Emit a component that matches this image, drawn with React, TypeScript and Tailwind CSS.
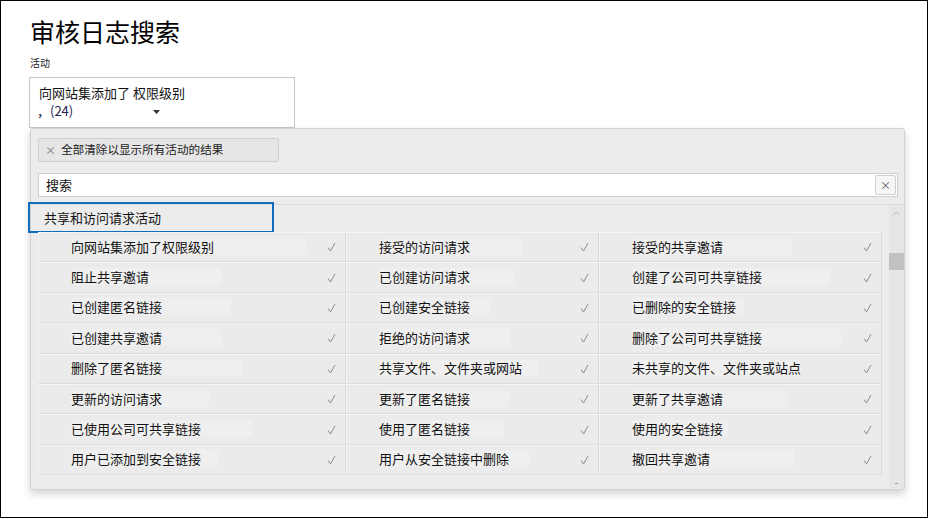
import { ChevronUp } from "lucide-react";

type Item = { label: string; hl: string };

const rows: Item[][] = [
  [
    { label: "向网站集添加了权限级别", hl: "min-w-[236px]" },
    { label: "接受的访问请求", hl: "min-w-[143px]" },
    { label: "接受的共享邀请", hl: "min-w-[160px]" },
  ],
  [
    { label: "阻止共享邀请", hl: "min-w-[150px]" },
    { label: "已创建访问请求", hl: "min-w-[135px]" },
    { label: "创建了公司可共享链接", hl: "min-w-[198px]" },
  ],
  [
    { label: "已创建匿名链接", hl: "min-w-[160px]" },
    { label: "已创建安全链接", hl: "min-w-[112px]" },
    { label: "已删除的安全链接", hl: "min-w-[112px]" },
  ],
  [
    { label: "已创建共享邀请", hl: "min-w-[150px]" },
    { label: "拒绝的访问请求", hl: "min-w-[131px]" },
    { label: "删除了公司可共享链接", hl: "min-w-[209px]" },
  ],
  [
    { label: "删除了匿名链接", hl: "min-w-[170px]" },
    { label: "共享文件、文件夹或网站", hl: "min-w-[160px]" },
    { label: "未共享的文件、文件夹或站点", hl: "min-w-[160px]" },
  ],
  [
    { label: "更新的访问请求", hl: "min-w-[138px]" },
    { label: "更新了匿名链接", hl: "min-w-[130px]" },
    { label: "更新了共享邀请", hl: "min-w-[156px]" },
  ],
  [
    { label: "已使用公司可共享链接", hl: "min-w-[181px]" },
    { label: "使用了匿名链接", hl: "min-w-[125px]" },
    { label: "使用的安全链接", hl: "min-w-[96px]" },
  ],
  [
    { label: "用户已添加到安全链接", hl: "min-w-[148px]" },
    { label: "用户从安全链接中删除", hl: "min-w-[150px]" },
    { label: "撤回共享邀请", hl: "min-w-[162px]" },
  ],
];

function Check() {
  return (
    <svg width="9" height="10" viewBox="0 0 9 10" className="shrink-0">
      <polyline points="1,5.5 3.5,9 8,1" fill="none" stroke="#8c8c8c" strokeWidth="1" />
    </svg>
  );
}

function Cell({ item }: { item: Item }) {
  return (
    <div className="flex h-[30.4px] items-center border-t border-b border-l border-r border-t-[#f6f6f6] border-b-[#dcdcdc] border-l-[#f4f4f4] border-r-[#d9d9d9] bg-[#ebebeb] pl-[32px] pr-[9px]">
      <span className={`${item.hl} -mt-[2px] bg-[#efefef] py-[1px] text-[13px] leading-[15px] text-[#111]`}>
        {item.label}
      </span>
      <span className="ml-auto">
        <Check />
      </span>
    </div>
  );
}

export default function App() {
  return (
    <div className="h-[518px] w-[928px] overflow-hidden border border-black bg-white pl-[28px] font-['Noto_Sans_CJK_SC','Noto_Sans',sans-serif] text-[#111]">
      <h1 className="ml-[1px] mt-[15px] text-[25px] leading-[30px] font-normal text-black">审核日志搜索</h1>
      <div className="ml-[1px] mt-[11px] text-[10px] leading-[12px] text-[#222]">活动</div>

      <div className="mt-[8px] h-[51px] w-[266px] border border-[#c6c6c6] bg-white pl-[9px] pt-[6px]">
        <div className="text-[13px] leading-[17px]">向网站集添加了 权限级别</div>
        <div className="mt-[1px] flex items-center text-[13px] leading-[17px]">
          <span className="-ml-[2px] text-[#22224a]">，(24)</span>
          <svg width="7" height="5" viewBox="0 0 7 5" className="ml-[80px] mt-[4px]">
            <polygon points="0,0 7,0 3.5,4" fill="#333" />
          </svg>
        </div>
      </div>

      <div className="ml-[1px] h-[362px] w-[875px] rounded-[3px] border border-[#d2d2d2] bg-[#ececec] shadow-[0_4px_8px_rgba(0,0,0,0.18)]">
        <div className="pl-[7px] pr-[6px] pt-[9px]">
          <div className="flex h-[24px] w-[241px] items-center rounded-[2px] border border-[#cfcfcf] bg-[#e6e6e6] pl-[6px] text-[12px]">
            <span className="text-[11px] leading-none text-[#777]">×</span>
            <span className="ml-[5px] text-[11.6px] text-[#1a1a1a]">全部清除以显示所有活动的结果</span>
          </div>
          <div className="mt-[11px] flex h-[24px] items-center border border-[#cfcfcf] bg-white pl-[7px] pr-[1px]">
            <span className="text-[13px] text-[#111]">搜索</span>
            <button className="ml-auto flex h-[20px] w-[21px] items-center justify-center rounded-[2px] border border-[#cfcfcf] bg-[#f6f6f6] text-[11px] leading-none text-[#555]">
              ×
            </button>
          </div>
        </div>

        <div className="mt-[7px] flex h-[284px] border-t border-[#dcdcdc]">
          <div className="flex-1 pl-[7px]">
            <div className="-ml-[10px] -mt-[3px] flex h-[31px] w-[246px] items-center border-2 border-[#116ebf] pl-[14px] text-[13px] text-[#111]">
              共享和访问请求活动
            </div>
            <div className="-mt-[1px] grid grid-cols-[308px_253px_283px]">
              {rows.map((r, i) => r.map((item, j) => <Cell key={`${i}-${j}`} item={item} />))}
            </div>
          </div>
          <div className="flex w-[15px] flex-col items-center bg-[#e6e6e6] pt-[3px]">
            <ChevronUp size={11} strokeWidth={1.2} className="text-[#888]" />
            <div className="mt-[34px] h-[17px] w-[15px] bg-[#c1c1c1]" />
            <div className="mt-auto mb-[4px] h-[1px] w-[3px] bg-[#999]" />
          </div>
        </div>
      </div>
    </div>
  );
}
